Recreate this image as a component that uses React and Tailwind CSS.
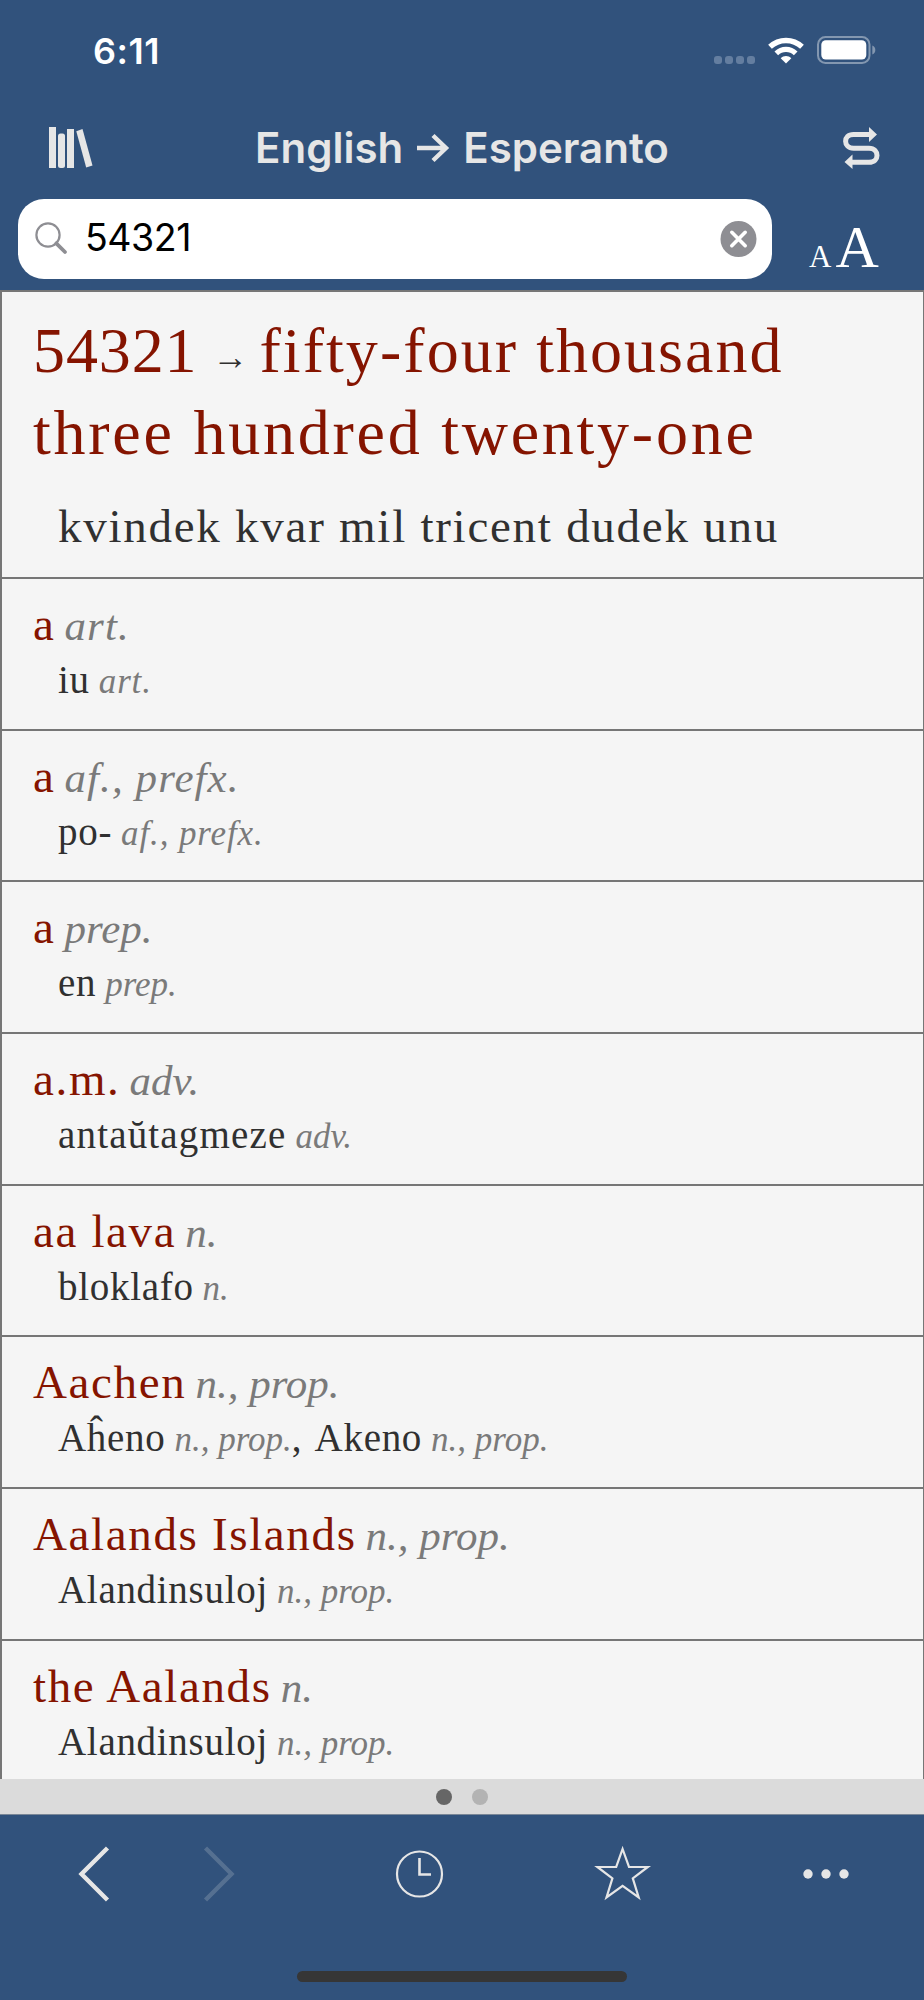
import { useState } from "react";

const ENTRIES = [
  { word: "a", pos: "art.", posClass: "tracking-[0.025em]", senses: [{ text: "iu", pos: "art." }] },
  { word: "a", pos: "af., prefx.", posClass: "tracking-[0.025em]", senses: [{ text: "po-", pos: "af., prefx." }] },
  { word: "a", pos: "prep.", senses: [{ text: "en", pos: "prep." }] },
  {
    word: "a.m.",
    pos: "adv.",
    senses: [{ text: "antaŭtagmeze", pos: "adv.", textClass: "tracking-[0.03em]" }],
  },
  { word: "aa lava", pos: "n.", senses: [{ text: "bloklafo", pos: "n." }] },
  {
    word: "Aachen",
    pos: "n., prop.",
    senses: [
      { text: "Aĥeno", pos: "n., prop." },
      { text: "Akeno", pos: "n., prop." },
    ],
  },
  { word: "Aalands Islands", pos: "n., prop.", senses: [{ text: "Alandinsuloj", pos: "n., prop." }] },
  { word: "the Aalands", pos: "n.", senses: [{ text: "Alandinsuloj", pos: "n., prop." }] },
];

function StatusBar() {
  return (
    <div className="flex h-[100px] items-center justify-between pl-[93px] pr-[47px]">
      <span className="pt-px text-[36px] font-semibold leading-none tracking-[0.015em] text-white">6:11</span>
      <div className="flex items-center">
        <div className="mr-[13px] mt-[19px] flex gap-[3px]">
          {[0, 1, 2, 3].map((i) => (
            <span key={i} className="size-2 rounded-[3px] bg-[#647ea0]" />
          ))}
        </div>
        <svg width="36" height="27" viewBox="0 0 36 27" className="mr-[13px] text-white" fill="none" stroke="currentColor">
          <path d="M2 9.8C11 1.3 25 1.3 34 9.8" strokeWidth="5.4" />
          <path d="M8.3 16.4C13.8 11 22.2 11 27.7 16.4" strokeWidth="5.2" />
          <path d="M18 26.5l-5.3-5.3c3-2.8 7.6-2.8 10.6 0z" fill="currentColor" stroke="none" />
        </svg>
        <svg width="60" height="28" viewBox="0 0 60 28" fill="none">
          <rect x="1" y="1" width="51.5" height="26" rx="7.5" stroke="#8397b0" strokeWidth="2" />
          <rect x="4.3" y="4.2" width="45" height="19.4" rx="4.5" fill="#fff" />
          <path d="M55.3 9.6c4 1.4 4 7.6 0 9z" fill="#8397b0" />
        </svg>
      </div>
    </div>
  );
}

function NavBar() {
  return (
    <div className="flex h-[96px] items-center justify-between pl-[48px] pr-[44px] text-[#e6e6e6]">
      <button aria-label="Dictionaries">
        <svg width="46" height="42" viewBox="0 0 46 42" fill="currentColor">
          <path d="M1 0h7v41H1zM19 2h7v39h-7z" />
          <rect x="10" y="6.5" width="7" height="34.5" rx="2.5" />
          <path d="M28.3 4.200l6.200-2.200 10 36.400-6.300 2.200z" />
        </svg>
      </button>
      <h1 className="mr-[12px] flex items-center whitespace-nowrap text-[42px] font-semibold leading-none">
        <span>English</span>
        <svg width="34" height="30" viewBox="0 0 34 30" className="ml-[13px] mr-[13px]" fill="none" stroke="currentColor" strokeWidth="4.4">
          <path d="M1 15h29M17 2.5L30 15 17 27.5" />
        </svg>
        <span>Esperanto</span>
      </h1>
      <button aria-label="Swap languages">
        <svg width="38" height="42" viewBox="0 0 38 42">
          <path
            d="M28 7.5H11.5C6 7.5 3.6 10.8 3.6 14.3s2.6 6.9 8 6.9H27c5.5 0 8 3.6 8 7.2s-2.5 6.9-8 6.9H9"
            fill="none"
            stroke="currentColor"
            strokeWidth="5"
          />
          <path d="M27 0l8 7.5-8 7.5zM10.5 27.5L2.5 35l8 7z" fill="currentColor" />
        </svg>
      </button>
    </div>
  );
}

function SearchBar({ value, onChange }) {
  return (
    <div className="flex h-[94px] items-start pl-[18px] pt-[3px]">
      <div className="flex h-[80px] w-[754px] items-center rounded-[26px] bg-white pl-[16px] pr-[15px]">
        <svg width="34" height="34" viewBox="0 0 34 34" fill="none" stroke="#8e8e93">
          <circle cx="14" cy="13" r="11.6" strokeWidth="2.2" />
          <path d="M22.3 21.3L31 30" strokeWidth="3.8" strokeLinecap="round" />
        </svg>
        <input
          value={value}
          onChange={(e) => onChange(e.target.value)}
          className="mb-[3px] ml-[17px] min-w-0 flex-1 bg-transparent text-[37.5px] leading-none tracking-[-0.012em] text-black outline-none"
        />
        <button aria-label="Clear" onClick={() => onChange("")}>
          <svg width="37" height="37" viewBox="0 0 37 37">
            <circle cx="18.5" cy="18" r="18" fill="#8e8e93" />
            <path d="M11.8 11.3l13.4 13.4M25.2 11.3L11.8 24.7" stroke="#fff" strokeWidth="3.6" strokeLinecap="round" />
          </svg>
        </button>
      </div>
      <button
        aria-label="Text size"
        className="ml-[37px] mt-[18px] flex items-baseline font-['Liberation_Serif',serif] leading-none text-white"
      >
        <span className="text-[31px]">A</span>
        <span className="ml-[4px] text-[60px]">A</span>
      </button>
    </div>
  );
}

function Entry({ word, pos, posClass = "", senses }) {
  return (
    <div className="h-[151.7px] shrink-0 border-b-2 border-[#767676] pl-[31px] pt-[18px]">
      <p className="whitespace-nowrap text-[47px] leading-[54px]">
        <span className="tracking-[0.035em] text-[#851400]">{word}</span>
        <span className={`ml-[9px] text-[43px] italic leading-none text-[#7a7a7a] ${posClass}`}>{pos}</span>
      </p>
      <p className="mt-[7px] whitespace-nowrap pl-[25px] text-[39px] leading-[44px]">
        {senses.map((s, i) => (
          <span key={s.text}>
            {i > 0 && <span className="mr-[13px]">,</span>}
            <span className={s.textClass || "tracking-[0.018em]"}>{s.text}</span>
            <span className={`ml-[9px] text-[35px] italic leading-none text-[#7a7a7a] ${posClass}`}>{s.pos}</span>
          </span>
        ))}
      </p>
    </div>
  );
}

function Toolbar() {
  return (
    <div className="flex h-[186px] flex-col border-t border-[#7a8797] bg-[#31527c]">
      <div className="flex h-[118px] items-center pl-[77px] text-[#e6e6e6]">
        <button aria-label="Back">
          <svg width="34" height="58" viewBox="0 0 34 58" fill="none" stroke="currentColor" strokeWidth="4.4">
            <path d="M30.5 3L4.5 29l26 26" />
          </svg>
        </button>
        <button aria-label="Forward" className="ml-[91px] opacity-20">
          <svg width="34" height="58" viewBox="0 0 34 58" fill="none" stroke="currentColor" strokeWidth="4.4">
            <path d="M3.5 3l26 26-26 26" />
          </svg>
        </button>
        <button aria-label="History" className="ml-[159px]">
          <svg width="49" height="50" viewBox="0 0 49 50" fill="none" stroke="currentColor" strokeWidth="2.2">
            <circle cx="24.5" cy="25" r="22.5" />
            <path d="M24.5 9v16.5H36" strokeWidth="2.6" />
          </svg>
        </button>
        <button aria-label="Favorites" className="ml-[149px]">
          <svg width="60" height="58" viewBox="0 0 60 58" fill="none" stroke="currentColor" strokeWidth="2.2" strokeMiterlimit="10">
            <path d="M29.6 4l6.4 17.8 18.8.2-15 11.3 5.9 19.2-16.1-11.6-16.1 11.6 5.9-19.2-15-11.3 18.8-.2z" />
          </svg>
        </button>
        <button aria-label="More" className="ml-[148px]">
          <svg width="52" height="20" viewBox="0 0 52 20" fill="currentColor">
            <circle cx="7" cy="10" r="4.7" />
            <circle cx="25" cy="10" r="4.7" />
            <circle cx="43" cy="10" r="4.7" />
          </svg>
        </button>
      </div>
      <div className="mx-auto mt-[38px] h-[11px] w-[330px] rounded-full bg-[#363636]" />
    </div>
  );
}

export default function App() {
  const [query, setQuery] = useState("54321");

  return (
    <div className="flex h-[2000px] w-[924px] flex-col overflow-hidden bg-[#31527c] font-[Inter,sans-serif]">
      <header className="h-[290px] shrink-0">
        <StatusBar />
        <NavBar />
        <SearchBar value={query} onChange={setQuery} />
      </header>

      <main className="flex h-[1489px] shrink-0 flex-col overflow-hidden border-l-2 border-r border-t-2 border-[#767676] bg-[#f5f5f5] font-['Liberation_Serif',serif] text-[#303030]">
        <div className="h-[287px] shrink-0 border-b-2 border-[#767676] pl-[31px] pt-[18px]">
          <h2 className="whitespace-nowrap text-[64px] leading-[82px] tracking-[0.043em] text-[#851400]">
            <span className="tracking-[0.014em]">54321</span>
            <span className="ml-[15px] mr-[11px] align-[3px] text-[36px] leading-none tracking-normal text-[#303030]">→</span>
            <span className="tracking-[0.032em]">fifty-four thousand</span>
            <br />
            three hundred twenty-one
          </h2>
          <p className="mt-[22px] whitespace-nowrap pl-[25px] text-[47px] leading-[60px] tracking-[0.037em]">
            kvindek kvar mil tricent dudek unu
          </p>
        </div>
        {ENTRIES.map((entry, i) => (
          <Entry key={i} {...entry} />
        ))}
      </main>

      <div className="flex h-[35px] shrink-0 items-center justify-center gap-[20px] bg-[#dbdbdb]">
        <span className="size-4 rounded-full bg-[#666666]" />
        <span className="size-4 rounded-full bg-[#b3b3b3]" />
      </div>

      <Toolbar />
    </div>
  );
}
